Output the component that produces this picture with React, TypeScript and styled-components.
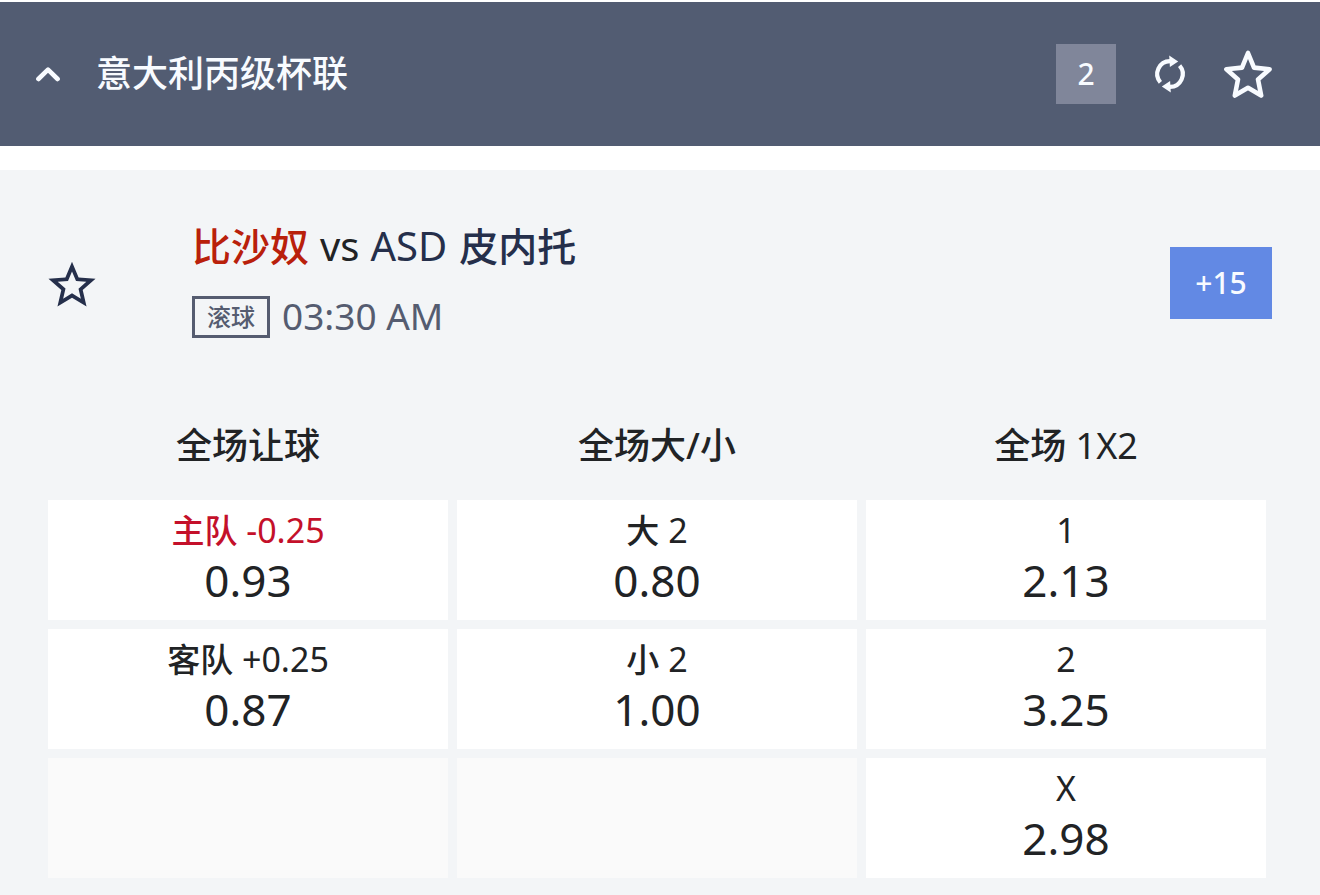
import React, { useState } from "react";
import styled, { createGlobalStyle } from "styled-components";

const GlobalStyle = createGlobalStyle`
  *, *::before, *::after { box-sizing: border-box; }
  body {
    margin: 0;
    background: #ffffff;
    color: #212325;
    font-family: "Noto Sans", "Noto Sans CJK SC", sans-serif;
  }
  button {
    margin: 0;
    padding: 0;
    border: 0;
    background: none;
    color: inherit;
    font: inherit;
    cursor: pointer;
  }
  svg { display: block; }
`;

const Page = styled.main`
  display: flex;
  flex-direction: column;
  gap: 24px;
  min-height: 100vh;
  padding-top: 2px;
`;

const LeagueBar = styled.header`
  display: flex;
  align-items: center;
  gap: 36px;
  min-height: 144px;
  padding: 0 48px 0 36px;
  background: #525c72;
  color: #f8fbff;
`;

const LeagueName = styled.h1`
  flex: 1;
  margin: 0;
  font-size: 36px;
  line-height: 48px;
  font-weight: 500;
`;

const Actions = styled.div`
  display: flex;
  align-items: center;
  gap: 30px;
`;

const IconButton = styled.button<{ $tone?: string }>`
  display: grid;
  place-items: center;
  flex: none;
  color: ${(p) => p.$tone ?? "inherit"};
`;

const Count = styled.span`
  display: grid;
  place-items: center;
  width: 60px;
  height: 60px;
  background: #80869a;
  font-size: 30px;
  line-height: 40px;
  font-weight: 500;
`;

const Event = styled.section`
  flex: 1;
  padding-bottom: 8px;
  background: #f3f5f7;
`;

const Match = styled.div`
  display: flex;
  align-items: center;
  gap: 96px;
  padding: 52px 48px 48px;
`;

const MatchInfo = styled.div`
  flex: 1;
`;

const Han = styled.span`
  font-weight: 500;
`;

const Teams = styled.h2`
  display: flex;
  align-items: baseline;
  gap: 11px;
  height: 48px;
  margin: 0 0 26px;
  font-size: 40px;
  line-height: 48px;
  font-weight: 400;

  ${Han} {
    font-size: 39px;
  }
`;

const Team = styled.span<{ $favourite?: boolean }>`
  display: flex;
  align-items: baseline;
  gap: 12px;
  color: ${(p) => (p.$favourite ? "#b9200b" : "#252f4b")};
`;

const Kickoff = styled.div`
  display: flex;
  align-items: flex-start;
  gap: 12px;
  height: 48px;
  color: #555c70;
`;

const LiveTag = styled.span`
  padding: 0 12px;
  border: 3px solid #555c70;
  font-size: 24px;
  line-height: 36px;
  font-weight: 500;
`;

const Time = styled.time`
  font-size: 37px;
  line-height: 40px;
`;

const MoreButton = styled.button`
  width: 102px;
  height: 72px;
  background: #6289e4;
  color: #f8fbff;
  font-size: 30px;
  line-height: 40px;
  font-weight: 500;
`;

const MarketsWrap = styled.div`
  padding: 0 45px 0 39px;
`;

const Markets = styled.table`
  width: 100%;
  table-layout: fixed;
  border-collapse: separate;
  border-spacing: 9px;
`;

const MarketHead = styled.th`
  height: 90px;
  padding: 0;
  font-size: 36px;
  line-height: 48px;
  font-weight: 400;
`;

const Cell = styled.td<{ $empty?: boolean }>`
  height: 120px;
  padding: 0;
  background: ${(p) => (p.$empty ? "#fafafa" : "#ffffff")};
`;

const Pick = styled.button`
  display: flex;
  flex-direction: column;
  align-items: center;
  width: 100%;
  height: 120px;
  padding-top: 6px;
`;

const PickLabel = styled.span<{ $home?: boolean }>`
  height: 48px;
  font-size: 34px;
  line-height: 48px;
  color: ${(p) => (p.$home ? "#c4102a" : "inherit")};

  ${Han} {
    font-size: 33px;
  }
`;

const Odds = styled.span`
  font-size: 44px;
  line-height: 52px;
`;

type Selection = { name?: string; line?: string; odds: string; home?: boolean } | null;

const heads = [
  { han: "全场让球", rest: "" },
  { han: "全场大/小", rest: "" },
  { han: "全场", rest: " 1X2" },
];

const rows: Selection[][] = [
  [
    { name: "主队", line: "-0.25", odds: "0.93", home: true },
    { name: "大", line: "2", odds: "0.80" },
    { line: "1", odds: "2.13" },
  ],
  [
    { name: "客队", line: "+0.25", odds: "0.87" },
    { name: "小", line: "2", odds: "1.00" },
    { line: "2", odds: "3.25" },
  ],
  [null, null, { line: "X", odds: "2.98" }],
];

function Chevron() {
  return (
    <svg width="24" height="24" viewBox="0 0 24 24" fill="none" stroke="currentColor" strokeWidth="4.6" strokeLinecap="round" strokeLinejoin="round">
      <path d="M2.4 17 12 7.6l9.6 9.4" />
    </svg>
  );
}

function Refresh() {
  return (
    <svg width="48" height="48" viewBox="0 0 48 48">
      <path d="M14.4 32.4A12.8 12.8 0 0 1 24 11.2M33.6 15.6A12.8 12.8 0 0 1 24 36.8" fill="none" stroke="currentColor" strokeWidth="4.2" />
      <path d="M23.2 5.6l9 5.8-8.3 5.6zM24.8 42.4l-9-5.8 8.3-5.6z" fill="currentColor" />
    </svg>
  );
}

function LeagueStar() {
  return (
    <svg width="48" height="48" viewBox="0 0 48 48" fill="none" stroke="currentColor" strokeWidth="4.6" strokeLinejoin="round">
      <path d="M24 3l6 14.6 15.6 1.6-11.6 10.2L37.2 45.6l-13.2-7.8-13.2 7.8 3.2-16.2L2.4 19.2 18 17.6z" />
    </svg>
  );
}

function MatchStar() {
  return (
    <svg width="48" height="48" viewBox="1.8 0.8 20.4 20.4" fill="currentColor">
      <path d="M22 9.24l-7.19-.62L12 2 9.19 8.63 2 9.24l5.46 4.73L5.82 21 12 17.27 18.18 21l-1.63-7.03L22 9.24zM12 15.4l-3.76 2.27 1-4.28-3.32-2.88 4.38-.38L12 6.1l1.71 4.04 4.38.38-3.32 2.88 1 4.28L12 15.4z" />
    </svg>
  );
}

export default function App() {
  const [open, setOpen] = useState(true);
  return (
    <Page>
      <GlobalStyle />
      <LeagueBar>
        <IconButton type="button" aria-label="收起" aria-expanded={open} onClick={() => setOpen(!open)}>
          <Chevron />
        </IconButton>
        <LeagueName>意大利丙级杯联</LeagueName>
        <Actions>
          <Count>2</Count>
          <IconButton type="button" aria-label="刷新">
            <Refresh />
          </IconButton>
          <IconButton type="button" aria-label="收藏联赛">
            <LeagueStar />
          </IconButton>
        </Actions>
      </LeagueBar>
      {open && (
        <Event>
          <Match>
            <IconButton type="button" aria-label="收藏赛事" $tone="#252f4b">
              <MatchStar />
            </IconButton>
            <MatchInfo>
              <Teams>
                <Team $favourite>
                  <Han>比沙奴</Han>
                </Team>
                <span>vs</span>
                <Team>
                  <span>ASD</span>
                  <Han>皮内托</Han>
                </Team>
              </Teams>
              <Kickoff>
                <LiveTag>滚球</LiveTag>
                <Time dateTime="03:30">03:30 AM</Time>
              </Kickoff>
            </MatchInfo>
            <MoreButton type="button">+15</MoreButton>
          </Match>
          <MarketsWrap>
            <Markets>
              <thead>
                <tr>
                  {heads.map((h) => (
                    <MarketHead key={h.han} scope="col">
                      <Han>{h.han}</Han>
                      {h.rest}
                    </MarketHead>
                  ))}
                </tr>
              </thead>
              <tbody>
                {rows.map((row, r) => (
                  <tr key={r}>
                    {row.map((s, c) => (
                      <Cell key={c} $empty={!s}>
                        {s && (
                          <Pick type="button">
                            <PickLabel $home={s.home}>
                              {s.name && <Han>{s.name}</Han>}
                              {s.name && " "}
                              {s.line}
                            </PickLabel>
                            <Odds>{s.odds}</Odds>
                          </Pick>
                        )}
                      </Cell>
                    ))}
                  </tr>
                ))}
              </tbody>
            </Markets>
          </MarketsWrap>
        </Event>
      )}
    </Page>
  );
}
